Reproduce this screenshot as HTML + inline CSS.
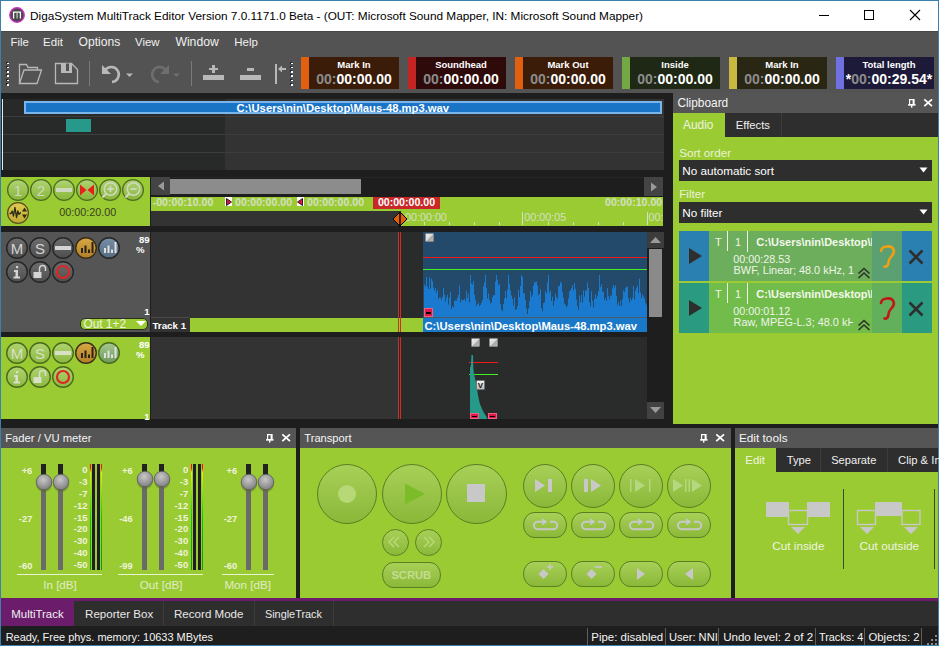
<!DOCTYPE html>
<html><head><meta charset="utf-8">
<style>
*{margin:0;padding:0;box-sizing:border-box}
html,body{width:939px;height:646px;overflow:hidden}
body{background:#3a80ae;font-family:"Liberation Sans",sans-serif;position:relative;color:#fff}
.a{position:absolute;display:block}
.t{position:absolute;white-space:pre;line-height:1}
</style></head><body>
<div class="a" style="left:1px;top:1px;width:937px;height:644px;background:#1e1e1e"></div>
<div class="a" style="left:1px;top:1px;width:937px;height:30px;background:#fff"></div>
<div class="a" style="left:1px;top:31px;width:937px;height:62px;background:#535353"></div>
<div class="a" style="left:1px;top:31px;width:937px;height:1px;background:#474747"></div>
<svg class="a" style="left:9px;top:7px;" width="16" height="16" viewBox="0 0 16 16"><circle cx="8" cy="8" r="7.2" fill="#484848" stroke="#c62fc6" stroke-width="1.4"/><path d="M4.6 11.5V5.2h6.8v6.3" fill="none" stroke="#fff" stroke-width="1.3"/><rect x="7.3" y="6" width="1.6" height="5.5" fill="#aaa"/></svg>
<div class="t" style="left:30px;top:11.00px;font-size:11.8px;font-weight:400;color:#000;">DigaSystem MultiTrack Editor Version 7.0.1171.0 Beta - (OUT: Microsoft Sound Mapper, IN: Microsoft Sound Mapper)</div>
<div class="a" style="left:819px;top:15px;width:10px;height:1px;background:#000"></div>
<div class="a" style="left:864px;top:10px;width:10px;height:10px;border:1px solid #000"></div>
<svg class="a" style="left:909px;top:9px;" width="12" height="12" viewBox="0 0 12 12"><path d="M1 1L11 11M11 1L1 11" stroke="#000" stroke-width="1.1"/></svg>
<div class="t" style="left:10.6px;top:37.00px;font-size:11.4px;font-weight:400;color:#f0f0f0;">File</div>
<div class="t" style="left:43.1px;top:37.00px;font-size:11.5px;font-weight:400;color:#f0f0f0;">Edit</div>
<div class="t" style="left:78.5px;top:36.00px;font-size:12.1px;font-weight:400;color:#f0f0f0;">Options</div>
<div class="t" style="left:135.1px;top:37.00px;font-size:11.4px;font-weight:400;color:#f0f0f0;">View</div>
<div class="t" style="left:175.4px;top:36.00px;font-size:12.2px;font-weight:400;color:#f0f0f0;">Window</div>
<div class="t" style="left:234.3px;top:37.00px;font-size:11.5px;font-weight:400;color:#f0f0f0;">Help</div>
<div class="a" style="left:6px;top:61.5px;width:2px;height:2px;background:#1c2230"></div>
<div class="a" style="left:7px;top:62.5px;width:1.6px;height:1.6px;background:#fff"></div>
<div class="a" style="left:6px;top:65.8px;width:2px;height:2px;background:#1c2230"></div>
<div class="a" style="left:7px;top:66.8px;width:1.6px;height:1.6px;background:#fff"></div>
<div class="a" style="left:6px;top:70.1px;width:2px;height:2px;background:#1c2230"></div>
<div class="a" style="left:7px;top:71.1px;width:1.6px;height:1.6px;background:#fff"></div>
<div class="a" style="left:6px;top:74.4px;width:2px;height:2px;background:#1c2230"></div>
<div class="a" style="left:7px;top:75.4px;width:1.6px;height:1.6px;background:#fff"></div>
<div class="a" style="left:6px;top:78.7px;width:2px;height:2px;background:#1c2230"></div>
<div class="a" style="left:7px;top:79.7px;width:1.6px;height:1.6px;background:#fff"></div>
<div class="a" style="left:6px;top:83.0px;width:2px;height:2px;background:#1c2230"></div>
<div class="a" style="left:7px;top:84.0px;width:1.6px;height:1.6px;background:#fff"></div>
<div class="a" style="left:290px;top:61.5px;width:2px;height:2px;background:#1c2230"></div>
<div class="a" style="left:291px;top:62.5px;width:1.6px;height:1.6px;background:#fff"></div>
<div class="a" style="left:290px;top:65.8px;width:2px;height:2px;background:#1c2230"></div>
<div class="a" style="left:291px;top:66.8px;width:1.6px;height:1.6px;background:#fff"></div>
<div class="a" style="left:290px;top:70.1px;width:2px;height:2px;background:#1c2230"></div>
<div class="a" style="left:291px;top:71.1px;width:1.6px;height:1.6px;background:#fff"></div>
<div class="a" style="left:290px;top:74.4px;width:2px;height:2px;background:#1c2230"></div>
<div class="a" style="left:291px;top:75.4px;width:1.6px;height:1.6px;background:#fff"></div>
<div class="a" style="left:290px;top:78.7px;width:2px;height:2px;background:#1c2230"></div>
<div class="a" style="left:291px;top:79.7px;width:1.6px;height:1.6px;background:#fff"></div>
<div class="a" style="left:290px;top:83.0px;width:2px;height:2px;background:#1c2230"></div>
<div class="a" style="left:291px;top:84.0px;width:1.6px;height:1.6px;background:#fff"></div>
<svg class="a" style="left:17px;top:62px;" width="26" height="24" viewBox="0 0 26 24"><path d="M2.5 21.5V2.5h7l1.5 3h9.5v2.5" fill="none" stroke="#b8b8b8" stroke-width="1.3"/><path d="M2.5 21.5L7 8h17.5l-4.5 13.5z" fill="none" stroke="#b8b8b8" stroke-width="1.3"/></svg>
<svg class="a" style="left:54px;top:62px;" width="26" height="24" viewBox="0 0 26 24"><path d="M1.5 1.5h16l6 6v14h-22z" fill="none" stroke="#b8b8b8" stroke-width="1.3"/><path d="M7 1.5h11v9.5h-11z" fill="#b8b8b8"/><path d="M12 1.5h3v7.5h-3z" fill="#535353"/></svg>
<div class="a" style="left:89px;top:61px;width:1px;height:25px;background:#7a7a7a"></div>
<svg class="a" style="left:100px;top:62px;" width="36" height="24" viewBox="0 0 36 24"><path d="M5 8.5 A7.5 7.5 0 1 1 12 20" fill="none" stroke="#b8b8b8" stroke-width="2.6"/><path d="M2 3v9h9z" fill="#b8b8b8"/><path d="M26 11.5h7l-3.5 3.5z" fill="#b8b8b8"/></svg>
<svg class="a" style="left:147px;top:62px;" width="36" height="24" viewBox="0 0 36 24"><path d="M19 8.5 A7.5 7.5 0 1 0 12 20" fill="none" stroke="#6e6e6e" stroke-width="2.6"/><path d="M22 3v9h-9z" fill="#6e6e6e"/><path d="M26 11.5h7l-3.5 3.5z" fill="#6e6e6e"/></svg>
<div class="a" style="left:191px;top:61px;width:1px;height:25px;background:#7a7a7a"></div>
<div class="a" style="left:203px;top:75px;width:21px;height:5px;background:#b8b8b8"></div>
<div class="a" style="left:209px;top:68px;width:9px;height:2px;background:#b8b8b8"></div>
<div class="a" style="left:212px;top:65px;width:3px;height:8px;background:#b8b8b8"></div>
<div class="a" style="left:240px;top:75px;width:21px;height:5px;background:#b8b8b8"></div>
<div class="a" style="left:247px;top:68px;width:7px;height:3px;background:#b8b8b8"></div>
<div class="a" style="left:275px;top:64px;width:2px;height:20px;background:#b8b8b8"></div>
<svg class="a" style="left:277px;top:64px;" width="10" height="10" viewBox="0 0 10 10"><path d="M2 5h7" stroke="#b8b8b8" stroke-width="2"/><path d="M1 5l4-3.5v7z" fill="#b8b8b8"/></svg>
<div class="a" style="left:301px;top:57px;width:8px;height:32px;background:#e06010"></div>
<div class="a" style="left:309px;top:57px;width:90px;height:32px;background:#3a1c08"></div>
<div class="t" style="left:309.00px;width:90px;text-align:center;top:60.00px;font-size:9.5px;font-weight:700;color:#fff;">Mark In</div>
<div class="t" style="left:309.00px;width:90px;text-align:center;top:72.00px;font-size:14px;font-weight:700;color:#fff;"><span style="color:#8c8c8c">00:</span>00:00.00</div>
<div class="a" style="left:408px;top:57px;width:8px;height:32px;background:#c42424"></div>
<div class="a" style="left:416px;top:57px;width:90px;height:32px;background:#2e0a0a"></div>
<div class="t" style="left:416.00px;width:90px;text-align:center;top:60.00px;font-size:9.5px;font-weight:700;color:#fff;">Soundhead</div>
<div class="t" style="left:416.00px;width:90px;text-align:center;top:72.00px;font-size:14px;font-weight:700;color:#fff;"><span style="color:#8c8c8c">00:</span>00:00.00</div>
<div class="a" style="left:515px;top:57px;width:8px;height:32px;background:#e06010"></div>
<div class="a" style="left:523px;top:57px;width:90px;height:32px;background:#3a1c08"></div>
<div class="t" style="left:523.00px;width:90px;text-align:center;top:60.00px;font-size:9.5px;font-weight:700;color:#fff;">Mark Out</div>
<div class="t" style="left:523.00px;width:90px;text-align:center;top:72.00px;font-size:14px;font-weight:700;color:#fff;"><span style="color:#8c8c8c">00:</span>00:00.00</div>
<div class="a" style="left:622px;top:57px;width:8px;height:32px;background:#74a844"></div>
<div class="a" style="left:630px;top:57px;width:90px;height:32px;background:#1e2814"></div>
<div class="t" style="left:630.00px;width:90px;text-align:center;top:60.00px;font-size:9.5px;font-weight:700;color:#fff;">Inside</div>
<div class="t" style="left:630.00px;width:90px;text-align:center;top:72.00px;font-size:14px;font-weight:700;color:#fff;"><span style="color:#8c8c8c">00:</span>00:00.00</div>
<div class="a" style="left:729px;top:57px;width:8px;height:32px;background:#c8b840"></div>
<div class="a" style="left:737px;top:57px;width:90px;height:32px;background:#2a2614"></div>
<div class="t" style="left:737.00px;width:90px;text-align:center;top:60.00px;font-size:9.5px;font-weight:700;color:#fff;">Mark In</div>
<div class="t" style="left:737.00px;width:90px;text-align:center;top:72.00px;font-size:14px;font-weight:700;color:#fff;"><span style="color:#8c8c8c">00:</span>00:00.00</div>
<div class="a" style="left:836px;top:57px;width:8px;height:32px;background:#7070e0"></div>
<div class="a" style="left:844px;top:57px;width:90px;height:32px;background:#1c1a38"></div>
<div class="t" style="left:844.00px;width:90px;text-align:center;top:60.00px;font-size:9.5px;font-weight:700;color:#fff;">Total length</div>
<div class="t" style="left:839.00px;width:100px;text-align:center;top:72.00px;font-size:14px;font-weight:700;color:#fff;">*<span style="color:#8c8c8c">00:</span>00:29.54*</div>
<div class="a" style="left:1px;top:99px;width:663px;height:71px;background:#282a2a"></div>
<div class="a" style="left:225px;top:99px;width:439px;height:71px;background:#333"></div>
<div class="a" style="left:1px;top:116px;width:663px;height:1px;background:#3c3e3e"></div>
<div class="a" style="left:1px;top:134px;width:663px;height:1px;background:#3c3e3e"></div>
<div class="a" style="left:1px;top:152px;width:663px;height:1px;background:#3c3e3e"></div>
<div class="a" style="left:2px;top:99px;width:1px;height:71px;background:#f0e6e6"></div>
<div class="a" style="left:24px;top:101px;width:638px;height:13px;background:#1a74c6;border:2px solid #7ab6ea"></div>
<div class="t" style="left:236.5px;top:103.00px;font-size:11.26px;font-weight:700;color:#fff;">C:\Users\nin\Desktop\Maus-48.mp3.wav</div>
<div class="a" style="left:66px;top:119px;width:25px;height:13px;background:#26998a"></div>
<div class="a" style="left:1px;top:177px;width:149px;height:49px;background:#9bcb33"></div>
<svg class="a" style="left:6px;top:178px;" width="24" height="24" viewBox="0 0 24 24"><defs><linearGradient id="z1" x1="0" y1="0" x2="0" y2="1"><stop offset="0" stop-color="#b0d474"/><stop offset="1" stop-color="#88b638"/></linearGradient></defs><circle cx="12" cy="12" r="10.4" fill="url(#z1)" stroke="#4e6e22" stroke-width="1.3"/><g transform="translate(1 1)"><text x="11" y="16.5" font-size="15" fill="#d0d8c0" text-anchor="middle" font-family="Liberation Sans">1</text></g></svg>
<svg class="a" style="left:29px;top:178px;" width="24" height="24" viewBox="0 0 24 24"><defs><linearGradient id="z2" x1="0" y1="0" x2="0" y2="1"><stop offset="0" stop-color="#b0d474"/><stop offset="1" stop-color="#88b638"/></linearGradient></defs><circle cx="12" cy="12" r="10.4" fill="url(#z2)" stroke="#4e6e22" stroke-width="1.3"/><g transform="translate(1 1)"><text x="11" y="16.5" font-size="15" fill="#d0d8c0" text-anchor="middle" font-family="Liberation Sans">2</text></g></svg>
<svg class="a" style="left:52px;top:178px;" width="24" height="24" viewBox="0 0 24 24"><defs><linearGradient id="z3" x1="0" y1="0" x2="0" y2="1"><stop offset="0" stop-color="#b0d474"/><stop offset="1" stop-color="#88b638"/></linearGradient></defs><circle cx="12" cy="12" r="10.4" fill="url(#z3)" stroke="#4e6e22" stroke-width="1.3"/><g transform="translate(1 1)"><rect x="3" y="9" width="16" height="4" fill="#d0d8c0"/></g></svg>
<svg class="a" style="left:75px;top:178px;" width="24" height="24" viewBox="0 0 24 24"><defs><linearGradient id="z4" x1="0" y1="0" x2="0" y2="1"><stop offset="0" stop-color="#b0d474"/><stop offset="1" stop-color="#88b638"/></linearGradient></defs><circle cx="12" cy="12" r="10.4" fill="url(#z4)" stroke="#4e6e22" stroke-width="1.3"/><g transform="translate(1 1)"><path d="M4 5.5L10.5 11L4 16.5zM18 5.5L11.5 11L18 16.5z" fill="#e8201c"/></g></svg>
<svg class="a" style="left:98px;top:178px;" width="24" height="24" viewBox="0 0 24 24"><defs><linearGradient id="z5" x1="0" y1="0" x2="0" y2="1"><stop offset="0" stop-color="#b0d474"/><stop offset="1" stop-color="#88b638"/></linearGradient></defs><circle cx="12" cy="12" r="10.4" fill="url(#z5)" stroke="#4e6e22" stroke-width="1.3"/><g transform="translate(1 1)"><circle cx="11.5" cy="10" r="6.2" fill="none" stroke="#d0d8c0" stroke-width="1.5"/><path d="M7.2 14.5L3.5 18.5" stroke="#d0d8c0" stroke-width="2"/><path d="M8.3 10h6.4M11.5 6.8v6.4" stroke="#d0d8c0" stroke-width="1.8"/></g></svg>
<svg class="a" style="left:121px;top:178px;" width="24" height="24" viewBox="0 0 24 24"><defs><linearGradient id="z6" x1="0" y1="0" x2="0" y2="1"><stop offset="0" stop-color="#b0d474"/><stop offset="1" stop-color="#88b638"/></linearGradient></defs><circle cx="12" cy="12" r="10.4" fill="url(#z6)" stroke="#4e6e22" stroke-width="1.3"/><g transform="translate(1 1)"><circle cx="11.5" cy="10" r="6.2" fill="none" stroke="#d0d8c0" stroke-width="1.5"/><path d="M7.2 14.5L3.5 18.5" stroke="#d0d8c0" stroke-width="2"/><path d="M8.3 10h6.4" stroke="#d0d8c0" stroke-width="1.8"/></g></svg>
<svg class="a" style="left:6px;top:201px;" width="24" height="24" viewBox="0 0 24 24"><defs><linearGradient id="z7" x1="0" y1="0" x2="0" y2="1"><stop offset="0" stop-color="#e0cc50"/><stop offset="1" stop-color="#c0a830"/></linearGradient></defs><circle cx="12" cy="12" r="10.4" fill="url(#z7)" stroke="#5a5020" stroke-width="1.3"/><g transform="translate(1 1)"><path d="M2.5 11.5h1.5l1.2-2.5 1.3 5 1.5-8.5 1.5 10 1.3-6.5 1.2 3.5 1-1.5h1" fill="none" stroke="#2a2a1a" stroke-width="1.3" stroke-linejoin="round"/><path d="M15 9.5l2.5-4 2.5 4zM15 12.5l2.5 4 2.5-4z" fill="#2a2a1a"/></g></svg>
<div class="t" style="left:47.70px;width:80px;text-align:center;top:207.00px;font-size:10.8px;font-weight:400;color:#38401e;">00:00:20.00</div>
<div class="a" style="left:151px;top:177px;width:512px;height:1px;background:#262626"></div>
<div class="a" style="left:151px;top:177px;width:19px;height:18px;background:#444"></div>
<svg class="a" style="left:155px;top:180px;" width="12" height="12" viewBox="0 0 12 12"><path d="M9 1.5v9l-6-4.5z" fill="#9a9a9a"/></svg>
<div class="a" style="left:170px;top:179px;width:191px;height:15px;background:#8c8c8c"></div>
<div class="a" style="left:644px;top:177px;width:19px;height:19px;background:#444"></div>
<svg class="a" style="left:648px;top:181px;" width="12" height="12" viewBox="0 0 12 12"><path d="M3 1.5v9l6-4.5z" fill="#9a9a9a"/></svg>
<div class="a" style="left:151px;top:197px;width:512px;height:29px;background:#9bcb33"></div>
<div class="a" style="left:151px;top:211px;width:248px;height:15px;background:#333"></div>
<div class="t" style="left:152.7px;top:197.00px;font-size:10.6px;font-weight:700;color:#d4e0c4;">-00:00:10.00</div>
<div class="a" style="left:225px;top:197px;width:7px;height:9px;background:#fff"></div>
<svg class="a" style="left:225px;top:197px;" width="7" height="9" viewBox="0 0 7 9"><path d="M1.5 1.5v7l5-3.5z" fill="#e0104a" stroke="#000" stroke-width="0.8"/></svg>
<div class="t" style="left:235px;top:197.00px;font-size:10.6px;font-weight:700;color:#d4e0c4;">00:00:00.00</div>
<div class="a" style="left:297px;top:197px;width:7px;height:9px;background:#fff"></div>
<svg class="a" style="left:297px;top:197px;" width="7" height="9" viewBox="0 0 7 9"><path d="M5.5 1.5v7l-5-3.5z" fill="#e0104a" stroke="#000" stroke-width="0.8"/></svg>
<div class="t" style="left:307px;top:197.00px;font-size:10.6px;font-weight:700;color:#d4e0c4;">00:00:00.00</div>
<div class="a" style="left:373px;top:197px;width:67px;height:12px;background:#c82828"></div>
<div class="t" style="left:373.00px;width:67px;text-align:center;top:197.00px;font-size:10.6px;font-weight:700;color:#fff;">00:00:00.00</div>
<div class="t" style="left:582.20px;width:80px;text-align:right;top:197.00px;font-size:10.6px;font-weight:700;color:#d4e0c4;">00:00:10.00</div>
<div class="a" style="left:424px;top:222px;width:1px;height:3px;background:#d4e0c4"></div>
<div class="a" style="left:449px;top:222px;width:1px;height:3px;background:#d4e0c4"></div>
<div class="a" style="left:474px;top:222px;width:1px;height:3px;background:#d4e0c4"></div>
<div class="a" style="left:499px;top:222px;width:1px;height:3px;background:#d4e0c4"></div>
<div class="a" style="left:548px;top:222px;width:1px;height:3px;background:#d4e0c4"></div>
<div class="a" style="left:573px;top:222px;width:1px;height:3px;background:#d4e0c4"></div>
<div class="a" style="left:598px;top:222px;width:1px;height:3px;background:#d4e0c4"></div>
<div class="a" style="left:623px;top:222px;width:1px;height:3px;background:#d4e0c4"></div>
<div class="a" style="left:522px;top:212px;width:1px;height:13px;background:#d4e0c4"></div>
<div class="a" style="left:647px;top:212px;width:1px;height:13px;background:#d4e0c4"></div>
<div class="t" style="left:405px;top:212.00px;font-size:10.76px;font-weight:400;color:#d4e0c4;">00:00:00</div>
<div class="t" style="left:524.3px;top:212.00px;font-size:10.76px;font-weight:400;color:#d4e0c4;">00:00:05</div>
<div class="t" style="left:648.5px;top:212.00px;font-size:10.76px;font-weight:400;color:#d4e0c4;">00:</div>
<div class="a" style="left:663px;top:197px;width:10px;height:29px;background:#1e1e1e"></div>
<svg class="a" style="left:392px;top:211px;" width="16" height="16" viewBox="0 0 16 16"><path d="M8 1L15 8L8 15L1 8z" fill="#e06010" stroke="#000" stroke-width="1"/><path d="M8 0v16" stroke="#000" stroke-width="1.4"/></svg>
<div class="a" style="left:1px;top:232px;width:149px;height:100px;background:#555"></div>
<svg class="a" style="left:6px;top:237px;" width="23" height="23" viewBox="0 0 23 23"><defs><linearGradient id="t232m" x1="0" y1="0" x2="0" y2="1"><stop offset="0" stop-color="#6e6e6e"/><stop offset="1" stop-color="#4e4e4e"/></linearGradient></defs><circle cx="11" cy="11" r="10.3" fill="url(#t232m)" stroke="#262626" stroke-width="1.4"/><text x="11" y="17" font-size="15" fill="#d4d4d4" text-anchor="middle" font-family="Liberation Sans">M</text></svg>
<svg class="a" style="left:29px;top:237px;" width="23" height="23" viewBox="0 0 23 23"><defs><linearGradient id="t232s" x1="0" y1="0" x2="0" y2="1"><stop offset="0" stop-color="#6e6e6e"/><stop offset="1" stop-color="#4e4e4e"/></linearGradient></defs><circle cx="11" cy="11" r="10.3" fill="url(#t232s)" stroke="#262626" stroke-width="1.4"/><text x="11" y="16.5" font-size="15" fill="#d4d4d4" text-anchor="middle" font-family="Liberation Sans">S</text></svg>
<svg class="a" style="left:52px;top:237px;" width="23" height="23" viewBox="0 0 23 23"><defs><linearGradient id="t232n" x1="0" y1="0" x2="0" y2="1"><stop offset="0" stop-color="#6e6e6e"/><stop offset="1" stop-color="#4e4e4e"/></linearGradient></defs><circle cx="11" cy="11" r="10.3" fill="url(#t232n)" stroke="#262626" stroke-width="1.4"/><rect x="3" y="9" width="16" height="4" fill="#d4d4d4"/></svg>
<svg class="a" style="left:75px;top:237px;" width="23" height="23" viewBox="0 0 23 23"><defs><linearGradient id="t232g" x1="0" y1="0" x2="0" y2="1"><stop offset="0" stop-color="#d8a844"/><stop offset="1" stop-color="#b08028"/></linearGradient></defs><circle cx="11" cy="11" r="10.3" fill="url(#t232g)" stroke="#3a2e18" stroke-width="1.4"/><path d="M6 16V11h2v5zM9.5 16V8.5h2V16zM13 16v-3.5h2V16zM16.5 16V5h2v11z" fill="#2a2418"/></svg>
<svg class="a" style="left:98px;top:237px;" width="23" height="23" viewBox="0 0 23 23"><defs><linearGradient id="t232b" x1="0" y1="0" x2="0" y2="1"><stop offset="0" stop-color="#7890a8"/><stop offset="1" stop-color="#546a80"/></linearGradient></defs><circle cx="11" cy="11" r="10.3" fill="url(#t232b)" stroke="#262626" stroke-width="1.4"/><path d="M6 16V11h2v5zM9.5 16V8.5h2V16zM13 16v-3.5h2V16zM16.5 16V5h2v11z" fill="#e0e0e0"/></svg>
<svg class="a" style="left:6px;top:261px;" width="23" height="23" viewBox="0 0 23 23"><defs><linearGradient id="t232i" x1="0" y1="0" x2="0" y2="1"><stop offset="0" stop-color="#6e6e6e"/><stop offset="1" stop-color="#4e4e4e"/></linearGradient></defs><circle cx="11" cy="11" r="10.3" fill="url(#t232i)" stroke="#262626" stroke-width="1.4"/><rect x="10" y="5" width="2.2" height="2.2" fill="#d4d4d4"/><path d="M8 9h4v6.5h2v2h-6.5v-2h2V11H8z" fill="#d4d4d4"/></svg>
<svg class="a" style="left:29px;top:261px;" width="23" height="23" viewBox="0 0 23 23"><defs><linearGradient id="t232l" x1="0" y1="0" x2="0" y2="1"><stop offset="0" stop-color="#6e6e6e"/><stop offset="1" stop-color="#4e4e4e"/></linearGradient></defs><circle cx="11" cy="11" r="10.3" fill="url(#t232l)" stroke="#262626" stroke-width="1.4"/><rect x="4.5" y="11" width="8" height="6" fill="#d4d4d4"/><path d="M10.5 11V7.5a3 3 0 0 1 6 0V10" fill="none" stroke="#d4d4d4" stroke-width="1.5"/></svg>
<svg class="a" style="left:52px;top:261px;" width="23" height="23" viewBox="0 0 23 23"><defs><linearGradient id="t232r" x1="0" y1="0" x2="0" y2="1"><stop offset="0" stop-color="#6e6e6e"/><stop offset="1" stop-color="#4e4e4e"/></linearGradient></defs><circle cx="11" cy="11" r="10.3" fill="url(#t232r)" stroke="#262626" stroke-width="1.4"/><circle cx="11" cy="11" r="6" fill="none" stroke="#e02424" stroke-width="2.2"/></svg>
<div class="t" style="left:119.60px;width:30px;text-align:right;top:235.00px;font-size:9.6px;font-weight:700;color:#fff;">89</div>
<div class="t" style="left:114.60px;width:30px;text-align:right;top:245.00px;font-size:9.6px;font-weight:700;color:#fff;">%</div>
<div class="a" style="left:1px;top:337px;width:149px;height:82px;background:#9bcb33"></div>
<svg class="a" style="left:6px;top:342px;" width="23" height="23" viewBox="0 0 23 23"><defs><linearGradient id="t337m" x1="0" y1="0" x2="0" y2="1"><stop offset="0" stop-color="#b0d470"/><stop offset="1" stop-color="#8cb840"/></linearGradient></defs><circle cx="11" cy="11" r="10.3" fill="url(#t337m)" stroke="#4a6a1e" stroke-width="1.4"/><text x="11" y="17" font-size="15" fill="#d8e0c8" text-anchor="middle" font-family="Liberation Sans">M</text></svg>
<svg class="a" style="left:29px;top:342px;" width="23" height="23" viewBox="0 0 23 23"><defs><linearGradient id="t337s" x1="0" y1="0" x2="0" y2="1"><stop offset="0" stop-color="#b0d470"/><stop offset="1" stop-color="#8cb840"/></linearGradient></defs><circle cx="11" cy="11" r="10.3" fill="url(#t337s)" stroke="#4a6a1e" stroke-width="1.4"/><text x="11" y="16.5" font-size="15" fill="#d8e0c8" text-anchor="middle" font-family="Liberation Sans">S</text></svg>
<svg class="a" style="left:52px;top:342px;" width="23" height="23" viewBox="0 0 23 23"><defs><linearGradient id="t337n" x1="0" y1="0" x2="0" y2="1"><stop offset="0" stop-color="#b0d470"/><stop offset="1" stop-color="#8cb840"/></linearGradient></defs><circle cx="11" cy="11" r="10.3" fill="url(#t337n)" stroke="#4a6a1e" stroke-width="1.4"/><rect x="3" y="9" width="16" height="4" fill="#d8e0c8"/></svg>
<svg class="a" style="left:75px;top:342px;" width="23" height="23" viewBox="0 0 23 23"><defs><linearGradient id="t337g" x1="0" y1="0" x2="0" y2="1"><stop offset="0" stop-color="#d8a844"/><stop offset="1" stop-color="#b08028"/></linearGradient></defs><circle cx="11" cy="11" r="10.3" fill="url(#t337g)" stroke="#3a2e18" stroke-width="1.4"/><path d="M6 16V11h2v5zM9.5 16V8.5h2V16zM13 16v-3.5h2V16zM16.5 16V5h2v11z" fill="#2a2418"/></svg>
<svg class="a" style="left:98px;top:342px;" width="23" height="23" viewBox="0 0 23 23"><defs><linearGradient id="t337b" x1="0" y1="0" x2="0" y2="1"><stop offset="0" stop-color="#a8c890"/><stop offset="1" stop-color="#6c9a5a"/></linearGradient></defs><circle cx="11" cy="11" r="10.3" fill="url(#t337b)" stroke="#4a6a1e" stroke-width="1.4"/><path d="M6 16V11h2v5zM9.5 16V8.5h2V16zM13 16v-3.5h2V16zM16.5 16V5h2v11z" fill="#e0e0e0"/></svg>
<svg class="a" style="left:6px;top:366px;" width="23" height="23" viewBox="0 0 23 23"><defs><linearGradient id="t337i" x1="0" y1="0" x2="0" y2="1"><stop offset="0" stop-color="#b0d470"/><stop offset="1" stop-color="#8cb840"/></linearGradient></defs><circle cx="11" cy="11" r="10.3" fill="url(#t337i)" stroke="#4a6a1e" stroke-width="1.4"/><rect x="10" y="5" width="2.2" height="2.2" fill="#d8e0c8"/><path d="M8 9h4v6.5h2v2h-6.5v-2h2V11H8z" fill="#d8e0c8"/></svg>
<svg class="a" style="left:29px;top:366px;" width="23" height="23" viewBox="0 0 23 23"><defs><linearGradient id="t337l" x1="0" y1="0" x2="0" y2="1"><stop offset="0" stop-color="#b0d470"/><stop offset="1" stop-color="#8cb840"/></linearGradient></defs><circle cx="11" cy="11" r="10.3" fill="url(#t337l)" stroke="#4a6a1e" stroke-width="1.4"/><rect x="4.5" y="11" width="8" height="6" fill="#d8e0c8"/><path d="M10.5 11V7.5a3 3 0 0 1 6 0V10" fill="none" stroke="#d8e0c8" stroke-width="1.5"/></svg>
<svg class="a" style="left:52px;top:366px;" width="23" height="23" viewBox="0 0 23 23"><defs><linearGradient id="t337r" x1="0" y1="0" x2="0" y2="1"><stop offset="0" stop-color="#b0d470"/><stop offset="1" stop-color="#8cb840"/></linearGradient></defs><circle cx="11" cy="11" r="10.3" fill="url(#t337r)" stroke="#4a6a1e" stroke-width="1.4"/><circle cx="11" cy="11" r="6" fill="none" stroke="#e02424" stroke-width="2.2"/></svg>
<div class="t" style="left:119.60px;width:30px;text-align:right;top:340.00px;font-size:9.6px;font-weight:700;color:#fff;">89</div>
<div class="t" style="left:114.60px;width:30px;text-align:right;top:350.00px;font-size:9.6px;font-weight:700;color:#fff;">%</div>
<div class="t" style="left:129.60px;width:20px;text-align:right;top:307.00px;font-size:9.6px;font-weight:700;color:#fff;">1</div>
<div class="t" style="left:129.60px;width:20px;text-align:right;top:412.00px;font-size:9.6px;font-weight:700;color:#fff;">1</div>
<div class="a" style="left:80px;top:318px;width:68px;height:12px;background:#9bcb33;border:1px solid #2a3018;border-radius:5px"></div>
<div class="t" style="left:83.4px;top:319.00px;font-size:11.9px;font-weight:400;color:#eef4e0;">Out 1+2</div>
<svg class="a" style="left:135px;top:320px;" width="12" height="7" viewBox="0 0 12 7"><path d="M1 1h10l-5 5z" fill="#fff"/></svg>
<div class="a" style="left:151px;top:232px;width:496px;height:100px;background:#2a2c2c"></div>
<div class="a" style="left:151px;top:232px;width:248px;height:100px;background:#333"></div>
<div class="a" style="left:151px;top:337px;width:496px;height:82px;background:#2a2c2c"></div>
<div class="a" style="left:151px;top:337px;width:248px;height:82px;background:#333"></div>
<div class="a" style="left:151px;top:317px;width:39px;height:15px;background:#333;border-top:1px solid #4a4a4a"></div>
<div class="t" style="left:152.4px;top:321.00px;font-size:9.8px;font-weight:700;color:#fff;">Track 1</div>
<div class="a" style="left:190px;top:318px;width:233px;height:14px;background:#9bcb33"></div>
<div class="a" style="left:423px;top:232px;width:224px;height:85px;background:#234a6a"></div>
<div class="a" style="left:423px;top:257px;width:224px;height:1px;background:#f01818"></div>
<div class="a" style="left:423px;top:269px;width:224px;height:1px;background:#40f020"></div>
<svg class="a" style="left:423px;top:232px;" width="224" height="85" viewBox="0 0 224 85"><path d="M1 85 L1 52.6 L2 52.6 L2 54.7 L3 54.7 L3 45.0 L4 45.0 L4 54.5 L5 54.5 L5 57.0 L6 57.0 L6 45.4 L7 45.4 L7 56.4 L8 56.4 L8 46.5 L9 46.5 L9 49.1 L10 49.1 L10 55.4 L11 55.4 L11 58.6 L12 58.6 L12 56.0 L13 56.0 L13 60.9 L14 60.9 L14 57.9 L15 57.9 L15 66.9 L16 66.9 L16 65.6 L17 65.6 L17 65.6 L18 65.6 L18 67.7 L19 67.7 L19 64.9 L20 64.9 L20 55.8 L21 55.8 L21 62.6 L22 62.6 L22 69.5 L23 69.5 L23 65.5 L24 65.5 L24 62.7 L25 62.7 L25 72.4 L26 72.4 L26 65.5 L27 65.5 L27 59.7 L28 59.7 L28 76.7 L29 76.7 L29 74.1 L30 74.1 L30 75.3 L31 75.3 L31 68.9 L32 68.9 L32 68.6 L33 68.6 L33 68.8 L34 68.8 L34 65.8 L35 65.8 L35 62.9 L36 62.9 L36 53.5 L37 53.5 L37 70.5 L38 70.5 L38 67.3 L39 67.3 L39 68.4 L40 68.4 L40 67.9 L41 67.9 L41 66.7 L42 66.7 L42 69.3 L43 69.3 L43 58.9 L44 58.9 L44 65.9 L45 65.9 L45 61.6 L46 61.6 L46 70.5 L47 70.5 L47 43.0 L48 43.0 L48 51.4 L49 51.4 L49 52.4 L50 52.4 L50 49.1 L51 49.1 L51 62.8 L52 62.8 L52 67.7 L53 67.7 L53 73.8 L54 73.8 L54 72.1 L55 72.1 L55 70.5 L56 70.5 L56 73.9 L57 73.9 L57 73.1 L58 73.1 L58 70.7 L59 70.7 L59 68.1 L60 68.1 L60 54.4 L61 54.4 L61 50.5 L62 50.5 L62 43.0 L63 43.0 L63 56.3 L64 56.3 L64 66.5 L65 66.5 L65 61.6 L66 61.6 L66 67.9 L67 67.9 L67 71.3 L68 71.3 L68 70.5 L69 70.5 L69 65.2 L70 65.2 L70 63.2 L71 63.2 L71 63.3 L72 63.3 L72 49.5 L73 49.5 L73 43.0 L74 43.0 L74 47.9 L75 47.9 L75 53.2 L76 53.2 L76 52.1 L77 52.1 L77 72.0 L78 72.0 L78 77.8 L79 77.8 L79 79.1 L80 79.1 L80 71.8 L81 71.8 L81 66.2 L82 66.2 L82 59.0 L83 59.0 L83 66.2 L84 66.2 L84 57.6 L85 57.6 L85 43.0 L86 43.0 L86 52.2 L87 52.2 L87 58.5 L88 58.5 L88 63.5 L89 63.5 L89 66.8 L90 66.8 L90 73.4 L91 73.4 L91 65.3 L92 65.3 L92 77.6 L93 77.6 L93 77.3 L94 77.3 L94 74.0 L95 74.0 L95 58.0 L96 58.0 L96 65.3 L97 65.3 L97 54.1 L98 54.1 L98 43.0 L99 43.0 L99 45.0 L100 45.0 L100 60.9 L101 60.9 L101 61.6 L102 61.6 L102 67.9 L103 67.9 L103 76.4 L104 76.4 L104 82.0 L105 82.0 L105 76.6 L106 76.6 L106 69.4 L107 69.4 L107 59.3 L108 59.3 L108 64.7 L109 64.7 L109 62.6 L110 62.6 L110 53.5 L111 53.5 L111 49.7 L112 49.7 L112 50.5 L113 50.5 L113 49.4 L114 49.4 L114 53.5 L115 53.5 L115 63.2 L116 63.2 L116 61.4 L117 61.4 L117 56.9 L118 56.9 L118 76.0 L119 76.0 L119 79.2 L120 79.2 L120 71.1 L121 71.1 L121 70.2 L122 70.2 L122 59.2 L123 59.2 L123 61.2 L124 61.2 L124 50.4 L125 50.4 L125 43.0 L126 43.0 L126 60.6 L127 60.6 L127 58.5 L128 58.5 L128 68.9 L129 68.9 L129 64.7 L130 64.7 L130 74.0 L131 74.0 L131 68.7 L132 68.7 L132 61.7 L133 61.7 L133 65.2 L134 65.2 L134 66.9 L135 66.9 L135 54.2 L136 54.2 L136 54.1 L137 54.1 L137 49.7 L138 49.7 L138 51.1 L139 51.1 L139 60.3 L140 60.3 L140 65.7 L141 65.7 L141 71.4 L142 71.4 L142 72.8 L143 72.8 L143 75.5 L144 75.5 L144 73.5 L145 73.5 L145 66.5 L146 66.5 L146 59.3 L147 59.3 L147 58.5 L148 58.5 L148 56.0 L149 56.0 L149 53.1 L150 53.1 L150 58.3 L151 58.3 L151 51.0 L152 51.0 L152 56.7 L153 56.7 L153 67.6 L154 67.6 L154 73.8 L155 73.8 L155 77.8 L156 77.8 L156 63.5 L157 63.5 L157 70.2 L158 70.2 L158 62.9 L159 62.9 L159 70.6 L160 70.6 L160 58.6 L161 58.6 L161 64.8 L162 64.8 L162 58.3 L163 58.3 L163 58.6 L164 58.6 L164 50.3 L165 50.3 L165 56.1 L166 56.1 L166 70.1 L167 70.1 L167 74.3 L168 74.3 L168 59.5 L169 59.5 L169 68.7 L170 68.7 L170 75.6 L171 75.6 L171 66.8 L172 66.8 L172 62.2 L173 62.2 L173 66.5 L174 66.5 L174 63.7 L175 63.7 L175 59.3 L176 59.3 L176 43.0 L177 43.0 L177 55.0 L178 55.0 L178 52.2 L179 52.2 L179 59.5 L180 59.5 L180 60.1 L181 60.1 L181 68.1 L182 68.1 L182 65.7 L183 65.7 L183 68.7 L184 68.7 L184 56.0 L185 56.0 L185 63.7 L186 63.7 L186 67.2 L187 67.2 L187 63.6 L188 63.6 L188 63.8 L189 63.8 L189 56.5 L190 56.5 L190 53.1 L191 53.1 L191 55.4 L192 55.4 L192 53.3 L193 53.3 L193 63.9 L194 63.9 L194 72.8 L195 72.8 L195 70.0 L196 70.0 L196 73.9 L197 73.9 L197 68.4 L198 68.4 L198 73.9 L199 73.9 L199 67.3 L200 67.3 L200 58.3 L201 58.3 L201 60.3 L202 60.3 L202 56.0 L203 56.0 L203 54.6 L204 54.6 L204 55.0 L205 55.0 L205 66.4 L206 66.4 L206 70.5 L207 70.5 L207 65.8 L208 65.8 L208 68.6 L209 68.6 L209 65.8 L210 65.8 L210 54.1 L211 54.1 L211 67.6 L212 67.6 L212 58.7 L213 58.7 L213 55.8 L214 55.8 L214 53.7 L215 53.7 L215 61.0 L216 61.0 L216 46.7 L217 46.7 L217 60.6 L218 60.6 L218 66.0 L219 66.0 L219 62.4 L220 62.4 L220 64.2 L221 64.2 L221 66.6 L222 66.6 L222 70.9 L223 70.9 L223 72.4 L224 72.4 L224 85Z" fill="#1a7ad0"/></svg>
<div class="a" style="left:423px;top:317px;width:224px;height:1px;background:#505a64"></div>
<div class="a" style="left:423px;top:318px;width:224px;height:14px;background:#1a78c8"></div>
<div class="t" style="left:424.5px;top:321.00px;font-size:11.26px;font-weight:700;color:#fff;">C:\Users\nin\Desktop\Maus-48.mp3.wav</div>
<div class="a" style="left:425px;top:233px;width:9px;height:9px;background:linear-gradient(135deg,#f0f0f0 0%,#d8d8d8 50%,#a8a8a8 51%,#b8b8b8 100%);border:1px solid #888;border-radius:1px"></div>
<div class="a" style="left:424px;top:308px;width:9px;height:9px;background:#e0184a;border:1px solid #f06080"></div>
<div class="a" style="left:426px;top:312px;width:5px;height:1.5px;background:#000"></div>
<div class="a" style="left:398px;top:232px;width:1px;height:100px;background:#c8302a"></div>
<div class="a" style="left:400px;top:232px;width:1px;height:100px;background:#c8302a"></div>
<div class="a" style="left:398px;top:337px;width:1px;height:82px;background:#c8302a"></div>
<div class="a" style="left:400px;top:337px;width:1px;height:82px;background:#c8302a"></div>
<div class="a" style="left:471px;top:338px;width:9px;height:9px;background:linear-gradient(135deg,#f0f0f0 0%,#d8d8d8 50%,#a8a8a8 51%,#b8b8b8 100%);border:1px solid #888;border-radius:1px"></div>
<div class="a" style="left:489px;top:338px;width:9px;height:9px;background:linear-gradient(135deg,#f0f0f0 0%,#d8d8d8 50%,#a8a8a8 51%,#b8b8b8 100%);border:1px solid #888;border-radius:1px"></div>
<div class="a" style="left:469px;top:362px;width:29px;height:1px;background:#f01818"></div>
<div class="a" style="left:469px;top:374px;width:29px;height:1px;background:#40f020"></div>
<svg class="a" style="left:469px;top:337px;" width="20" height="82" viewBox="0 0 20 82"><path d="M1 82V31L2 28L2.4 18L4 18L4.3 31L5 37L6 41L7 46L8 52L9 58L10 63L11 67L13 72L15 76L17 79L18.5 82Z" fill="#26998a"/></svg>
<div class="a" style="left:476px;top:380px;width:9px;height:10px;background:linear-gradient(#f4f4f4,#b8b8b8);border:1px solid #777;border-radius:1px"></div>
<div class="t" style="left:476.00px;width:9px;text-align:center;top:382.00px;font-size:8px;font-weight:700;color:#111;">V</div>
<div class="a" style="left:470px;top:413px;width:9px;height:6px;background:#e0184a;border:1px solid #f06080"></div>
<div class="a" style="left:472px;top:415.5px;width:5px;height:1.5px;background:#000"></div>
<div class="a" style="left:488px;top:413px;width:9px;height:6px;background:#e0184a;border:1px solid #f06080"></div>
<div class="a" style="left:490px;top:415.5px;width:5px;height:1.5px;background:#000"></div>
<div class="a" style="left:647px;top:232px;width:17px;height:187px;background:#1e1e1e"></div>
<div class="a" style="left:647px;top:232px;width:17px;height:16px;background:#3c3c3c"></div>
<svg class="a" style="left:649px;top:234px;" width="13" height="12" viewBox="0 0 13 12"><path d="M1 9h11L6.5 3z" fill="#9a9a9a"/></svg>
<div class="a" style="left:649px;top:249px;width:13px;height:68px;background:#8a8a8a"></div>
<div class="a" style="left:647px;top:402px;width:17px;height:17px;background:#424242"></div>
<svg class="a" style="left:649px;top:405px;" width="13" height="10" viewBox="0 0 13 10"><path d="M1 2h11L6.5 8z" fill="#9a9a9a"/></svg>
<div class="a" style="left:673px;top:93px;width:265px;height:20px;background:#555"></div>
<div class="t" style="left:677.4px;top:98.00px;font-size:11.88px;font-weight:400;color:#f4f4f4;">Clipboard</div>
<svg class="a" style="left:908px;top:98px;" width="26" height="10" viewBox="0 0 26 10"><path d="M1.6 1.6h4.2v5h-4.2z" fill="none" stroke="#fff" stroke-width="1.2"/><rect x="4.6" y="1" width="1.8" height="6" fill="#fff"/><rect x="0" y="6.2" width="7.6" height="1.4" fill="#fff"/><rect x="3" y="7.4" width="1.4" height="2.2" fill="#fff"/><path d="M16.3 1.3L24 8.2M24 1.3L16.3 8.2" stroke="#fff" stroke-width="1.8"/></svg>
<div class="a" style="left:673px;top:113px;width:265px;height:24px;background:#2e2e2e"></div>
<div class="a" style="left:673px;top:113px;width:52px;height:24px;background:#9bcb33"></div>
<div class="a" style="left:781px;top:113px;width:1px;height:24px;background:#3c3c3c"></div>
<div class="t" style="left:683px;top:120.00px;font-size:11.88px;font-weight:400;color:#eef4e0;">Audio</div>
<div class="t" style="left:735.8px;top:120.00px;font-size:11.22px;font-weight:400;color:#f0f0f0;">Effects</div>
<div class="a" style="left:673px;top:137px;width:265px;height:287px;background:#9bcb33"></div>
<div class="t" style="left:679.2px;top:147.00px;font-size:11.68px;font-weight:400;color:#eaf2da;">Sort order</div>
<div class="a" style="left:679px;top:160px;width:253px;height:21px;background:#2e2e2e"></div>
<div class="t" style="left:682.2px;top:165.00px;font-size:11.71px;font-weight:400;color:#fff;">No automatic sort</div>
<svg class="a" style="left:919px;top:167px;" width="10" height="6" viewBox="0 0 10 6"><path d="M0.5 0.5h8l-4 5z" fill="#fff"/></svg>
<div class="t" style="left:679.2px;top:188.00px;font-size:11.68px;font-weight:400;color:#eaf2da;">Filter</div>
<div class="a" style="left:679px;top:202px;width:253px;height:21px;background:#2e2e2e"></div>
<div class="t" style="left:682.2px;top:207.00px;font-size:11.71px;font-weight:400;color:#fff;">No filter</div>
<svg class="a" style="left:919px;top:209px;" width="10" height="6" viewBox="0 0 10 6"><path d="M0.5 0.5h8l-4 5z" fill="#fff"/></svg>
<div class="a" style="left:679px;top:231px;width:253px;height:50px;background:#6cae5c"></div>
<div class="a" style="left:679px;top:231px;width:30px;height:50px;background:#2a80b0"></div>
<div class="a" style="left:872px;top:231px;width:30px;height:50px;background:#5aa072"></div>
<div class="a" style="left:902px;top:231px;width:30px;height:50px;background:#2a80b0"></div>
<svg class="a" style="left:688px;top:247px;" width="16" height="18" viewBox="0 0 16 18"><path d="M1 1v16l13-8z" fill="#2e2e2e"/></svg>
<div class="a" style="left:727px;top:231px;width:1px;height:20px;background:#f0f4e8"></div>
<div class="a" style="left:747px;top:231px;width:1px;height:21px;background:#f0f4e8"></div>
<div class="t" style="left:714.9px;top:237.00px;font-size:11px;font-weight:400;color:#f0f4e8;">T</div>
<div class="t" style="left:735px;top:237.00px;font-size:11px;font-weight:400;color:#f0f4e8;">1</div>
<div class="a" style="left:756px;top:236.6px;width:116px;height:14px;overflow:hidden"><div class="t" style="left:0.3px;top:0;font-size:11px;font-weight:700;color:#f4f8ec">C:\Users\nin\Desktop\Maus-48.mp3.wav</div></div>
<div class="t" style="left:733.3px;top:254.00px;font-size:10.77px;font-weight:400;color:#f0f4e8;">00:00:28.53</div>
<div class="a" style="left:733px;top:265px;width:121px;height:14px;overflow:hidden"><div class="t" style="left:0.6px;top:0;font-size:10.9px;color:#f0f4e8">BWF, Linear; 48.0 kHz, 1</div></div>
<svg class="a" style="left:857px;top:267px;" width="14" height="12" viewBox="0 0 14 12"><path d="M1.5 6.5L7 1.5L12.5 6.5M1.5 11L7 6L12.5 11" fill="none" stroke="#2e2e2e" stroke-width="1.6"/></svg>
<svg class="a" style="left:878px;top:244px;" width="20" height="25" viewBox="0 0 20 25"><path d="M3 7C3.5 1.5 14.5 0.5 15.8 6.5C16.8 11.5 10.5 13 10.5 18C10.5 21.5 8.5 23 6.5 22.5" fill="none" stroke="#f0a010" stroke-width="2.6" stroke-linecap="round"/></svg>
<svg class="a" style="left:908px;top:249px;" width="16" height="16" viewBox="0 0 16 16"><path d="M1.5 1.5L14.5 14.5M14.5 1.5L1.5 14.5" stroke="#2e2e2e" stroke-width="2.6"/></svg>
<div class="a" style="left:679px;top:283px;width:253px;height:50px;background:#72bc4c"></div>
<div class="a" style="left:679px;top:283px;width:30px;height:50px;background:#2a9a80"></div>
<div class="a" style="left:872px;top:283px;width:30px;height:50px;background:#62b05c"></div>
<div class="a" style="left:902px;top:283px;width:30px;height:50px;background:#2a9a80"></div>
<svg class="a" style="left:688px;top:299px;" width="16" height="18" viewBox="0 0 16 18"><path d="M1 1v16l13-8z" fill="#2e2e2e"/></svg>
<div class="a" style="left:727px;top:283px;width:1px;height:20px;background:#f0f4e8"></div>
<div class="a" style="left:747px;top:283px;width:1px;height:21px;background:#f0f4e8"></div>
<div class="t" style="left:714.9px;top:289.00px;font-size:11px;font-weight:400;color:#f0f4e8;">T</div>
<div class="t" style="left:735px;top:289.00px;font-size:11px;font-weight:400;color:#f0f4e8;">1</div>
<div class="a" style="left:756px;top:288.6px;width:116px;height:14px;overflow:hidden"><div class="t" style="left:0.3px;top:0;font-size:11px;font-weight:700;color:#f4f8ec">C:\Users\nin\Desktop\Maus-48.mp3.wav</div></div>
<div class="t" style="left:733.3px;top:306.00px;font-size:10.77px;font-weight:400;color:#f0f4e8;">00:00:01.12</div>
<div class="a" style="left:733px;top:317px;width:120px;height:14px;overflow:hidden"><div class="t" style="left:0.6px;top:0;font-size:10.9px;color:#f0f4e8">Raw, MPEG-L.3; 48.0 kHz</div></div>
<svg class="a" style="left:857px;top:319px;" width="14" height="12" viewBox="0 0 14 12"><path d="M1.5 6.5L7 1.5L12.5 6.5M1.5 11L7 6L12.5 11" fill="none" stroke="#2e2e2e" stroke-width="1.6"/></svg>
<svg class="a" style="left:878px;top:296px;" width="20" height="25" viewBox="0 0 20 25"><path d="M3 7C3.5 1.5 14.5 0.5 15.8 6.5C16.8 11.5 10.5 13 10.5 18C10.5 21.5 8.5 23 6.5 22.5" fill="none" stroke="#c01818" stroke-width="2.6" stroke-linecap="round"/></svg>
<svg class="a" style="left:908px;top:301px;" width="16" height="16" viewBox="0 0 16 16"><path d="M1.5 1.5L14.5 14.5M14.5 1.5L1.5 14.5" stroke="#2e2e2e" stroke-width="2.6"/></svg>
<div class="a" style="left:1px;top:428px;width:295px;height:20px;background:#555"></div>
<div class="t" style="left:5.2px;top:433.00px;font-size:11.26px;font-weight:400;color:#f4f4f4;">Fader / VU meter</div>
<svg class="a" style="left:266px;top:433px;" width="26" height="10" viewBox="0 0 26 10"><path d="M1.6 1.6h4.2v5h-4.2z" fill="none" stroke="#fff" stroke-width="1.2"/><rect x="4.6" y="1" width="1.8" height="6" fill="#fff"/><rect x="0" y="6.2" width="7.6" height="1.4" fill="#fff"/><rect x="3" y="7.4" width="1.4" height="2.2" fill="#fff"/><path d="M16.3 1.3L24 8.2M24 1.3L16.3 8.2" stroke="#fff" stroke-width="1.8"/></svg>
<div class="a" style="left:1px;top:448px;width:295px;height:150px;background:#9bcb33"></div>
<div class="a" style="left:41px;top:464px;width:5px;height:106px;background:#6a6a6a"></div>
<div class="a" style="left:41px;top:464px;width:5px;height:17.5px;background:#222"></div>
<svg class="a" style="left:34.5px;top:472.5px;" width="18" height="20" viewBox="0 0 18 20"><defs><radialGradient id="kn" cx="0.45" cy="0.35" r="0.7"><stop offset="0" stop-color="#c8c8c8"/><stop offset="1" stop-color="#7a7a7a"/></radialGradient></defs><ellipse cx="9" cy="11" rx="8" ry="8" fill="#5a6e30" opacity="0.5"/><circle cx="9" cy="9" r="7.8" fill="url(#kn)" stroke="#5a5a5a" stroke-width="0.8"/></svg>
<div class="a" style="left:58px;top:464px;width:5px;height:106px;background:#6a6a6a"></div>
<div class="a" style="left:58px;top:464px;width:5px;height:17.5px;background:#222"></div>
<svg class="a" style="left:51.5px;top:472.5px;" width="18" height="20" viewBox="0 0 18 20"><defs><radialGradient id="kn" cx="0.45" cy="0.35" r="0.7"><stop offset="0" stop-color="#c8c8c8"/><stop offset="1" stop-color="#7a7a7a"/></radialGradient></defs><ellipse cx="9" cy="11" rx="8" ry="8" fill="#5a6e30" opacity="0.5"/><circle cx="9" cy="9" r="7.8" fill="url(#kn)" stroke="#5a5a5a" stroke-width="0.8"/></svg>
<div class="t" style="left:2.30px;width:30px;text-align:right;top:467.00px;font-size:9.3px;font-weight:700;color:#eef4dc;">+6</div>
<div class="t" style="left:2.30px;width:30px;text-align:right;top:515.00px;font-size:9.3px;font-weight:700;color:#eef4dc;">-27</div>
<div class="t" style="left:2.30px;width:30px;text-align:right;top:562.00px;font-size:9.3px;font-weight:700;color:#eef4dc;">-60</div>
<div class="t" style="left:57.50px;width:30px;text-align:right;top:465.00px;font-size:9.5px;font-weight:700;color:#eef4dc;">0</div>
<div class="t" style="left:57.50px;width:30px;text-align:right;top:477.00px;font-size:9.5px;font-weight:700;color:#eef4dc;">-3</div>
<div class="t" style="left:57.50px;width:30px;text-align:right;top:489.00px;font-size:9.5px;font-weight:700;color:#eef4dc;">-7</div>
<div class="t" style="left:57.50px;width:30px;text-align:right;top:501.00px;font-size:9.5px;font-weight:700;color:#eef4dc;">-12</div>
<div class="t" style="left:57.50px;width:30px;text-align:right;top:513.00px;font-size:9.5px;font-weight:700;color:#eef4dc;">-15</div>
<div class="t" style="left:57.50px;width:30px;text-align:right;top:524.00px;font-size:9.5px;font-weight:700;color:#eef4dc;">-20</div>
<div class="t" style="left:57.50px;width:30px;text-align:right;top:536.00px;font-size:9.5px;font-weight:700;color:#eef4dc;">-30</div>
<div class="t" style="left:57.50px;width:30px;text-align:right;top:548.00px;font-size:9.5px;font-weight:700;color:#eef4dc;">-40</div>
<div class="t" style="left:57.50px;width:30px;text-align:right;top:560.00px;font-size:9.5px;font-weight:700;color:#eef4dc;">-50</div>
<div class="a" style="left:90px;top:464px;width:1px;height:106px;background:linear-gradient(#ff1000 0%,#ff1000 4%,#ff8000 6%,#f0f000 8%,#a0f000 20%,#00d000 50%,#00a000 100%)"></div>
<div class="a" style="left:101px;top:464px;width:1px;height:106px;background:linear-gradient(#ff1000 0%,#ff1000 4%,#ff8000 6%,#f0f000 8%,#a0f000 20%,#00d000 50%,#00a000 100%)"></div>
<div class="a" style="left:92px;top:464px;width:3px;height:106px;background:#1e1e24"></div>
<div class="a" style="left:97px;top:464px;width:3px;height:106px;background:#1e1e24"></div>
<div class="a" style="left:17px;top:574px;width:85px;height:1px;background:#e8f4d0"></div>
<div class="t" style="left:43.2px;top:579.00px;font-size:11.65px;font-weight:400;color:#e0ecc8;">In [dB]</div>
<div class="a" style="left:142px;top:464px;width:5px;height:106px;background:#6a6a6a"></div>
<div class="a" style="left:142px;top:464px;width:5px;height:14.5px;background:#222"></div>
<svg class="a" style="left:135.5px;top:469.5px;" width="18" height="20" viewBox="0 0 18 20"><defs><radialGradient id="kn" cx="0.45" cy="0.35" r="0.7"><stop offset="0" stop-color="#c8c8c8"/><stop offset="1" stop-color="#7a7a7a"/></radialGradient></defs><ellipse cx="9" cy="11" rx="8" ry="8" fill="#5a6e30" opacity="0.5"/><circle cx="9" cy="9" r="7.8" fill="url(#kn)" stroke="#5a5a5a" stroke-width="0.8"/></svg>
<div class="a" style="left:159px;top:464px;width:5px;height:106px;background:#6a6a6a"></div>
<div class="a" style="left:159px;top:464px;width:5px;height:14.5px;background:#222"></div>
<svg class="a" style="left:152.5px;top:469.5px;" width="18" height="20" viewBox="0 0 18 20"><defs><radialGradient id="kn" cx="0.45" cy="0.35" r="0.7"><stop offset="0" stop-color="#c8c8c8"/><stop offset="1" stop-color="#7a7a7a"/></radialGradient></defs><ellipse cx="9" cy="11" rx="8" ry="8" fill="#5a6e30" opacity="0.5"/><circle cx="9" cy="9" r="7.8" fill="url(#kn)" stroke="#5a5a5a" stroke-width="0.8"/></svg>
<div class="t" style="left:102.60px;width:30px;text-align:right;top:467.00px;font-size:9.3px;font-weight:700;color:#eef4dc;">+6</div>
<div class="t" style="left:102.60px;width:30px;text-align:right;top:515.00px;font-size:9.3px;font-weight:700;color:#eef4dc;">-46</div>
<div class="t" style="left:102.60px;width:30px;text-align:right;top:562.00px;font-size:9.3px;font-weight:700;color:#eef4dc;">-99</div>
<div class="t" style="left:158.20px;width:30px;text-align:right;top:465.00px;font-size:9.5px;font-weight:700;color:#eef4dc;">0</div>
<div class="t" style="left:158.20px;width:30px;text-align:right;top:477.00px;font-size:9.5px;font-weight:700;color:#eef4dc;">-3</div>
<div class="t" style="left:158.20px;width:30px;text-align:right;top:489.00px;font-size:9.5px;font-weight:700;color:#eef4dc;">-7</div>
<div class="t" style="left:158.20px;width:30px;text-align:right;top:501.00px;font-size:9.5px;font-weight:700;color:#eef4dc;">-12</div>
<div class="t" style="left:158.20px;width:30px;text-align:right;top:513.00px;font-size:9.5px;font-weight:700;color:#eef4dc;">-15</div>
<div class="t" style="left:158.20px;width:30px;text-align:right;top:524.00px;font-size:9.5px;font-weight:700;color:#eef4dc;">-20</div>
<div class="t" style="left:158.20px;width:30px;text-align:right;top:536.00px;font-size:9.5px;font-weight:700;color:#eef4dc;">-30</div>
<div class="t" style="left:158.20px;width:30px;text-align:right;top:548.00px;font-size:9.5px;font-weight:700;color:#eef4dc;">-40</div>
<div class="t" style="left:158.20px;width:30px;text-align:right;top:560.00px;font-size:9.5px;font-weight:700;color:#eef4dc;">-50</div>
<div class="a" style="left:191px;top:464px;width:1px;height:106px;background:linear-gradient(#ff1000 0%,#ff1000 4%,#ff8000 6%,#f0f000 8%,#a0f000 20%,#00d000 50%,#00a000 100%)"></div>
<div class="a" style="left:202px;top:464px;width:1px;height:106px;background:linear-gradient(#ff1000 0%,#ff1000 4%,#ff8000 6%,#f0f000 8%,#a0f000 20%,#00d000 50%,#00a000 100%)"></div>
<div class="a" style="left:193px;top:464px;width:3px;height:106px;background:#1e1e24"></div>
<div class="a" style="left:198px;top:464px;width:3px;height:106px;background:#1e1e24"></div>
<div class="a" style="left:118px;top:574px;width:85px;height:1px;background:#e8f4d0"></div>
<div class="t" style="left:139.8px;top:579.00px;font-size:11.65px;font-weight:400;color:#e0ecc8;">Out [dB]</div>
<div class="a" style="left:246px;top:464px;width:5px;height:106px;background:#6a6a6a"></div>
<div class="a" style="left:246px;top:464px;width:5px;height:17.5px;background:#222"></div>
<svg class="a" style="left:239.5px;top:472.5px;" width="18" height="20" viewBox="0 0 18 20"><defs><radialGradient id="kn" cx="0.45" cy="0.35" r="0.7"><stop offset="0" stop-color="#c8c8c8"/><stop offset="1" stop-color="#7a7a7a"/></radialGradient></defs><ellipse cx="9" cy="11" rx="8" ry="8" fill="#5a6e30" opacity="0.5"/><circle cx="9" cy="9" r="7.8" fill="url(#kn)" stroke="#5a5a5a" stroke-width="0.8"/></svg>
<div class="a" style="left:263px;top:464px;width:5px;height:106px;background:#6a6a6a"></div>
<div class="a" style="left:263px;top:464px;width:5px;height:17.5px;background:#222"></div>
<svg class="a" style="left:256.5px;top:472.5px;" width="18" height="20" viewBox="0 0 18 20"><defs><radialGradient id="kn" cx="0.45" cy="0.35" r="0.7"><stop offset="0" stop-color="#c8c8c8"/><stop offset="1" stop-color="#7a7a7a"/></radialGradient></defs><ellipse cx="9" cy="11" rx="8" ry="8" fill="#5a6e30" opacity="0.5"/><circle cx="9" cy="9" r="7.8" fill="url(#kn)" stroke="#5a5a5a" stroke-width="0.8"/></svg>
<div class="t" style="left:207.20px;width:30px;text-align:right;top:467.00px;font-size:9.3px;font-weight:700;color:#eef4dc;">+6</div>
<div class="t" style="left:207.20px;width:30px;text-align:right;top:515.00px;font-size:9.3px;font-weight:700;color:#eef4dc;">-27</div>
<div class="t" style="left:207.20px;width:30px;text-align:right;top:562.00px;font-size:9.3px;font-weight:700;color:#eef4dc;">-60</div>
<div class="a" style="left:222px;top:574px;width:52px;height:1px;background:#e8f4d0"></div>
<div class="t" style="left:224.4px;top:579.00px;font-size:11.65px;font-weight:400;color:#e0ecc8;">Mon [dB]</div>
<div class="a" style="left:300px;top:428px;width:431px;height:20px;background:#555"></div>
<div class="t" style="left:304.3px;top:433.00px;font-size:11.15px;font-weight:400;color:#f4f4f4;">Transport</div>
<svg class="a" style="left:700px;top:433px;" width="26" height="10" viewBox="0 0 26 10"><path d="M1.6 1.6h4.2v5h-4.2z" fill="none" stroke="#fff" stroke-width="1.2"/><rect x="4.6" y="1" width="1.8" height="6" fill="#fff"/><rect x="0" y="6.2" width="7.6" height="1.4" fill="#fff"/><rect x="3" y="7.4" width="1.4" height="2.2" fill="#fff"/><path d="M16.3 1.3L24 8.2M24 1.3L16.3 8.2" stroke="#fff" stroke-width="1.8"/></svg>
<div class="a" style="left:300px;top:448px;width:431px;height:150px;background:#9bcb33"></div>
<svg class="a" style="left:317px;top:464px;" width="60" height="60" viewBox="0 0 60 60"><defs><linearGradient id="tb1" x1="0" y1="0" x2="0" y2="1"><stop offset="0" stop-color="#a8d058"/><stop offset="1" stop-color="#8ab838"/></linearGradient></defs><rect x="0.5" y="0.5" width="59" height="59" rx="29.5" ry="29.5" fill="url(#tb1)" stroke="#5a7e22" stroke-width="1"/><circle cx="30" cy="30" r="9" fill="#b8d878"/></svg>
<svg class="a" style="left:382px;top:464px;" width="60" height="60" viewBox="0 0 60 60"><defs><linearGradient id="tb2" x1="0" y1="0" x2="0" y2="1"><stop offset="0" stop-color="#a8d058"/><stop offset="1" stop-color="#8ab838"/></linearGradient></defs><rect x="0.5" y="0.5" width="59" height="59" rx="29.5" ry="29.5" fill="url(#tb2)" stroke="#5a7e22" stroke-width="1"/><path d="M23 19.5v21l20-10.5z" fill="#7cbc28"/></svg>
<svg class="a" style="left:446px;top:464px;" width="61" height="60" viewBox="0 0 61 60"><defs><linearGradient id="tb3" x1="0" y1="0" x2="0" y2="1"><stop offset="0" stop-color="#a8d058"/><stop offset="1" stop-color="#8ab838"/></linearGradient></defs><rect x="0.5" y="0.5" width="60" height="59" rx="29.5" ry="29.5" fill="url(#tb3)" stroke="#5a7e22" stroke-width="1"/><rect x="21" y="20" width="18" height="18" fill="#c8c8c8"/></svg>
<svg class="a" style="left:382px;top:529px;" width="27" height="27" viewBox="0 0 27 27"><defs><linearGradient id="tb4" x1="0" y1="0" x2="0" y2="1"><stop offset="0" stop-color="#a8d058"/><stop offset="1" stop-color="#8ab838"/></linearGradient></defs><rect x="0.5" y="0.5" width="26" height="26" rx="13.0" ry="13.0" fill="url(#tb4)" stroke="#5a7e22" stroke-width="1"/><path d="M12 8l-5 5 5 5M17 8l-5 5 5 5" fill="none" stroke="#b8d878" stroke-width="1.5"/></svg>
<svg class="a" style="left:414.5px;top:529px;" width="27" height="27" viewBox="0 0 27 27"><defs><linearGradient id="tb5" x1="0" y1="0" x2="0" y2="1"><stop offset="0" stop-color="#a8d058"/><stop offset="1" stop-color="#8ab838"/></linearGradient></defs><rect x="0.5" y="0.5" width="26" height="26" rx="13.0" ry="13.0" fill="url(#tb5)" stroke="#5a7e22" stroke-width="1"/><path d="M9 8l5 5-5 5M14 8l5 5-5 5" fill="none" stroke="#b8d878" stroke-width="1.5"/></svg>
<svg class="a" style="left:382px;top:562px;" width="59" height="26" viewBox="0 0 59 26"><defs><linearGradient id="tb6" x1="0" y1="0" x2="0" y2="1"><stop offset="0" stop-color="#a8d058"/><stop offset="1" stop-color="#8ab838"/></linearGradient></defs><rect x="0.5" y="0.5" width="58" height="25" rx="10.5" ry="12.5" fill="url(#tb6)" stroke="#5a7e22" stroke-width="1"/></svg>
<div class="t" style="left:382.30px;width:58px;text-align:center;top:570.00px;font-size:11.2px;font-weight:700;color:#c4dc90;">SCRUB</div>
<svg class="a" style="left:523px;top:464px;" width="44" height="44" viewBox="0 0 44 44"><defs><linearGradient id="m1" x1="0" y1="0" x2="0" y2="1"><stop offset="0" stop-color="#a8d058"/><stop offset="1" stop-color="#8ab838"/></linearGradient></defs><rect x="0.5" y="0.5" width="43" height="43" rx="21.5" ry="21.5" fill="url(#m1)" stroke="#5a7e22" stroke-width="1"/><path d="M12 15v13l10-6.5z" fill="#c8c8c8"/><rect x="25" y="15" width="4" height="13" fill="#c8c8c8"/></svg>
<svg class="a" style="left:571.2px;top:464px;" width="44" height="44" viewBox="0 0 44 44"><defs><linearGradient id="m2" x1="0" y1="0" x2="0" y2="1"><stop offset="0" stop-color="#a8d058"/><stop offset="1" stop-color="#8ab838"/></linearGradient></defs><rect x="0.5" y="0.5" width="43" height="43" rx="21.5" ry="21.5" fill="url(#m2)" stroke="#5a7e22" stroke-width="1"/><rect x="13" y="15" width="4" height="13" fill="#c8c8c8"/><path d="M20 15v13l10-6.5z" fill="#c8c8c8"/></svg>
<svg class="a" style="left:619.4px;top:464px;" width="44" height="44" viewBox="0 0 44 44"><defs><linearGradient id="m3" x1="0" y1="0" x2="0" y2="1"><stop offset="0" stop-color="#a8d058"/><stop offset="1" stop-color="#8ab838"/></linearGradient></defs><rect x="0.5" y="0.5" width="43" height="43" rx="21.5" ry="21.5" fill="url(#m3)" stroke="#5a7e22" stroke-width="1"/><rect x="11" y="15" width="1.5" height="13" fill="#b4d880"/><path d="M16 15v13l10-6.5z" fill="#b4d880"/><rect x="30" y="15" width="1.5" height="13" fill="#b4d880"/></svg>
<svg class="a" style="left:667.2px;top:464px;" width="44" height="44" viewBox="0 0 44 44"><defs><linearGradient id="m4" x1="0" y1="0" x2="0" y2="1"><stop offset="0" stop-color="#a8d058"/><stop offset="1" stop-color="#8ab838"/></linearGradient></defs><rect x="0.5" y="0.5" width="43" height="43" rx="21.5" ry="21.5" fill="url(#m4)" stroke="#5a7e22" stroke-width="1"/><path d="M6 15v13l10-6.5z" fill="#b4d880"/><rect x="18" y="15" width="1.5" height="13" fill="#b4d880"/><rect x="21.5" y="15" width="1.5" height="13" fill="#b4d880"/><path d="M25 15v13l10-6.5z" fill="#b4d880"/></svg>
<svg class="a" style="left:523px;top:512px;" width="44" height="26" viewBox="0 0 44 26"><defs><linearGradient id="lp0" x1="0" y1="0" x2="0" y2="1"><stop offset="0" stop-color="#a8d058"/><stop offset="1" stop-color="#8ab838"/></linearGradient></defs><rect x="0.5" y="0.5" width="43" height="25" rx="10.5" ry="12.5" fill="url(#lp0)" stroke="#5a7e22" stroke-width="1"/><path d="M20 9.8H14.6A3.7 3.7 0 0 0 14.6 17.2H30.6A3.7 3.7 0 0 0 30.6 9.8H27" fill="none" stroke="#c8c8c8" stroke-width="2"/><path d="M19.4 6L24.2 9.8L19.4 13.4z" fill="#c8c8c8"/></svg>
<svg class="a" style="left:571.2px;top:512px;" width="44" height="26" viewBox="0 0 44 26"><defs><linearGradient id="lp1" x1="0" y1="0" x2="0" y2="1"><stop offset="0" stop-color="#a8d058"/><stop offset="1" stop-color="#8ab838"/></linearGradient></defs><rect x="0.5" y="0.5" width="43" height="25" rx="10.5" ry="12.5" fill="url(#lp1)" stroke="#5a7e22" stroke-width="1"/><path d="M20 9.8H14.6A3.7 3.7 0 0 0 14.6 17.2H30.6A3.7 3.7 0 0 0 30.6 9.8H27" fill="none" stroke="#c8c8c8" stroke-width="2"/><path d="M19.4 6L24.2 9.8L19.4 13.4z" fill="#c8c8c8"/></svg>
<svg class="a" style="left:619.4px;top:512px;" width="44" height="26" viewBox="0 0 44 26"><defs><linearGradient id="lp2" x1="0" y1="0" x2="0" y2="1"><stop offset="0" stop-color="#a8d058"/><stop offset="1" stop-color="#8ab838"/></linearGradient></defs><rect x="0.5" y="0.5" width="43" height="25" rx="10.5" ry="12.5" fill="url(#lp2)" stroke="#5a7e22" stroke-width="1"/><path d="M20 9.8H14.6A3.7 3.7 0 0 0 14.6 17.2H30.6A3.7 3.7 0 0 0 30.6 9.8H27" fill="none" stroke="#c8c8c8" stroke-width="2"/><path d="M19.4 6L24.2 9.8L19.4 13.4z" fill="#c8c8c8"/></svg>
<svg class="a" style="left:667.2px;top:512px;" width="44" height="26" viewBox="0 0 44 26"><defs><linearGradient id="lp3" x1="0" y1="0" x2="0" y2="1"><stop offset="0" stop-color="#a8d058"/><stop offset="1" stop-color="#8ab838"/></linearGradient></defs><rect x="0.5" y="0.5" width="43" height="25" rx="10.5" ry="12.5" fill="url(#lp3)" stroke="#5a7e22" stroke-width="1"/><path d="M20 9.8H14.6A3.7 3.7 0 0 0 14.6 17.2H30.6A3.7 3.7 0 0 0 30.6 9.8H27" fill="none" stroke="#c8c8c8" stroke-width="2"/><path d="M19.4 6L24.2 9.8L19.4 13.4z" fill="#c8c8c8"/></svg>
<svg class="a" style="left:523px;top:561px;" width="44" height="26" viewBox="0 0 44 26"><defs><linearGradient id="r1" x1="0" y1="0" x2="0" y2="1"><stop offset="0" stop-color="#a8d058"/><stop offset="1" stop-color="#8ab838"/></linearGradient></defs><rect x="0.5" y="0.5" width="43" height="25" rx="10.5" ry="12.5" fill="url(#r1)" stroke="#5a7e22" stroke-width="1"/><path d="M15.5 13l5-5 5 5-5 5z" fill="#c8c8c8"/><path d="M24 6h6M27 3v6" stroke="#c8c8c8" stroke-width="1.6"/></svg>
<svg class="a" style="left:571.2px;top:561px;" width="44" height="26" viewBox="0 0 44 26"><defs><linearGradient id="r2" x1="0" y1="0" x2="0" y2="1"><stop offset="0" stop-color="#a8d058"/><stop offset="1" stop-color="#8ab838"/></linearGradient></defs><rect x="0.5" y="0.5" width="43" height="25" rx="10.5" ry="12.5" fill="url(#r2)" stroke="#5a7e22" stroke-width="1"/><path d="M15.5 13l5-5 5 5-5 5z" fill="#c8c8c8"/><path d="M24 6h7" stroke="#c8c8c8" stroke-width="1.6"/></svg>
<svg class="a" style="left:619.4px;top:561px;" width="44" height="26" viewBox="0 0 44 26"><defs><linearGradient id="r3" x1="0" y1="0" x2="0" y2="1"><stop offset="0" stop-color="#a8d058"/><stop offset="1" stop-color="#8ab838"/></linearGradient></defs><rect x="0.5" y="0.5" width="43" height="25" rx="10.5" ry="12.5" fill="url(#r3)" stroke="#5a7e22" stroke-width="1"/><path d="M18 7v12l8-6z" fill="#c8c8c8"/></svg>
<svg class="a" style="left:667.2px;top:561px;" width="44" height="26" viewBox="0 0 44 26"><defs><linearGradient id="r4" x1="0" y1="0" x2="0" y2="1"><stop offset="0" stop-color="#a8d058"/><stop offset="1" stop-color="#8ab838"/></linearGradient></defs><rect x="0.5" y="0.5" width="43" height="25" rx="10.5" ry="12.5" fill="url(#r4)" stroke="#5a7e22" stroke-width="1"/><path d="M26 7v12l-8-6z" fill="#c8c8c8"/></svg>
<div class="a" style="left:735px;top:428px;width:203px;height:20px;background:#555"></div>
<div class="t" style="left:738.9px;top:433.00px;font-size:11.83px;font-weight:400;color:#f4f4f4;">Edit tools</div>
<div class="a" style="left:735px;top:448px;width:203px;height:24px;background:#2e2e2e"></div>
<div class="a" style="left:735px;top:448px;width:41px;height:24px;background:#9bcb33"></div>
<div class="a" style="left:820px;top:448px;width:1px;height:24px;background:#3c3c3c"></div>
<div class="a" style="left:887px;top:448px;width:1px;height:24px;background:#3c3c3c"></div>
<div class="t" style="left:745.3px;top:455.00px;font-size:11.41px;font-weight:400;color:#eef4e0;">Edit</div>
<div class="t" style="left:786.8px;top:455.00px;font-size:11.2px;font-weight:400;color:#f0f0f0;">Type</div>
<div class="t" style="left:831.2px;top:455.00px;font-size:11.14px;font-weight:400;color:#f0f0f0;">Separate</div>
<div class="t" style="left:898px;top:455.00px;font-size:11.3px;font-weight:400;color:#f0f0f0;">Clip &amp; In</div>
<div class="a" style="left:735px;top:472px;width:203px;height:126px;background:#9bcb33"></div>
<div class="a" style="left:843px;top:489px;width:1px;height:80px;background:#3a4a2a"></div>
<div class="a" style="left:934px;top:489px;width:1px;height:80px;background:#3a4a2a"></div>
<svg class="a" style="left:760px;top:498px;" width="80" height="40" viewBox="0 0 80 40"><rect x="6" y="4" width="23" height="15" fill="#c8c8c8"/><rect x="47" y="4" width="23" height="15" fill="#c8c8c8"/><rect x="28.5" y="12.5" width="19" height="14" fill="none" stroke="#c8c8c8" stroke-width="1.4"/><path d="M31 29h14l-7 7z" fill="#c8c8c8"/></svg>
<div class="t" style="left:772.3px;top:540.00px;font-size:11.72px;font-weight:400;color:#eef4e0;">Cut inside</div>
<svg class="a" style="left:850px;top:498px;" width="80" height="40" viewBox="0 0 80 40"><rect x="25" y="4" width="27" height="14" fill="#c8c8c8"/><rect x="7.5" y="12.5" width="18" height="14" fill="none" stroke="#c8c8c8" stroke-width="1.4"/><rect x="52" y="12.5" width="18" height="14" fill="none" stroke="#c8c8c8" stroke-width="1.4"/><path d="M10 29h14l-7 7zM54 29h14l-7 7z" fill="#c8c8c8"/></svg>
<div class="t" style="left:859.5px;top:541.00px;font-size:11.8px;font-weight:400;color:#eef4e0;">Cut outside</div>
<div class="a" style="left:1px;top:598px;width:937px;height:3px;background:#6b1d6b"></div>
<div class="a" style="left:1px;top:601px;width:937px;height:25px;background:#2e2e2e"></div>
<div class="a" style="left:1px;top:601px;width:73px;height:25px;background:#6b1d6b"></div>
<div class="a" style="left:163px;top:601px;width:1px;height:25px;background:#3c3c3c"></div>
<div class="a" style="left:254px;top:601px;width:1px;height:25px;background:#3c3c3c"></div>
<div class="a" style="left:333px;top:601px;width:1px;height:25px;background:#3c3c3c"></div>
<div class="t" style="left:11.3px;top:609.00px;font-size:11.44px;font-weight:400;color:#f0f0f0;">MultiTrack</div>
<div class="t" style="left:85.1px;top:609.00px;font-size:11.57px;font-weight:400;color:#e8e8e8;">Reporter Box</div>
<div class="t" style="left:174px;top:609.00px;font-size:11.58px;font-weight:400;color:#e8e8e8;">Record Mode</div>
<div class="t" style="left:264.9px;top:609.00px;font-size:10.9px;font-weight:400;color:#e8e8e8;">SingleTrack</div>
<div class="a" style="left:1px;top:626px;width:937px;height:19px;background:#1e1e1e"></div>
<div class="t" style="left:5.7px;top:632.00px;font-size:10.96px;font-weight:400;color:#f4f4f4;">Ready, Free phys. memory: 10633 MBytes</div>
<div class="a" style="left:587px;top:628px;width:1px;height:17px;background:#5e5e5e"></div>
<div class="a" style="left:665px;top:628px;width:1px;height:17px;background:#5e5e5e"></div>
<div class="a" style="left:718px;top:628px;width:1px;height:17px;background:#5e5e5e"></div>
<div class="a" style="left:815px;top:628px;width:1px;height:17px;background:#5e5e5e"></div>
<div class="a" style="left:864px;top:628px;width:1px;height:17px;background:#5e5e5e"></div>
<div class="a" style="left:921px;top:628px;width:1px;height:17px;background:#5e5e5e"></div>
<div class="t" style="left:591.3px;top:632.00px;font-size:11.44px;font-weight:400;color:#f4f4f4;">Pipe: disabled</div>
<div class="t" style="left:668.9px;top:632.00px;font-size:11.15px;font-weight:400;color:#f4f4f4;">User: NNI</div>
<div class="t" style="left:723.2px;top:632.00px;font-size:11.56px;font-weight:400;color:#f4f4f4;">Undo level: 2 of 2</div>
<div class="t" style="left:818.9px;top:632.00px;font-size:10.9px;font-weight:400;color:#f4f4f4;">Tracks: 4</div>
<div class="t" style="left:868.5px;top:632.00px;font-size:11.34px;font-weight:400;color:#f4f4f4;">Objects: 2</div>
<div class="a" style="left:935px;top:635px;width:2px;height:2px;background:#888"></div>
<div class="a" style="left:931px;top:639px;width:2px;height:2px;background:#888"></div>
<div class="a" style="left:935px;top:639px;width:2px;height:2px;background:#888"></div>
<div class="a" style="left:927px;top:643px;width:2px;height:2px;background:#888"></div>
<div class="a" style="left:931px;top:643px;width:2px;height:2px;background:#888"></div>
<div class="a" style="left:935px;top:643px;width:2px;height:2px;background:#888"></div>
</body></html>
